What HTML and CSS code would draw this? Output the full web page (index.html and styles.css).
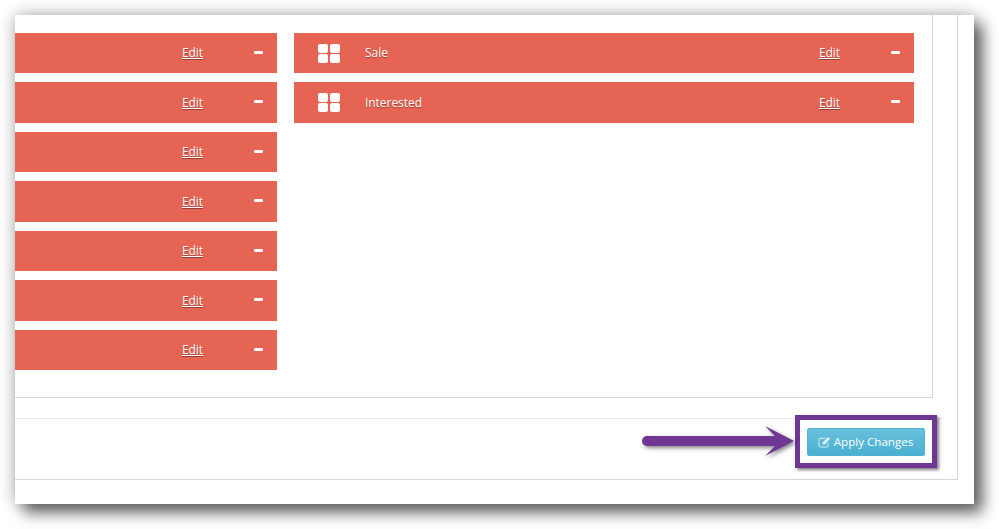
FILE: index.html
```html
<!DOCTYPE html>
<html lang="en">

<head>
    <meta charset="UTF-8">
    <title>Apply Changes</title>
    <link rel="stylesheet" href="styles.css">
</head>

<body>
    <div class="ventana">
        <div class="marco">
            <div class="caja">
                <div class="columna izquierda">
                    <div class="fila"><a class="editar">Edit</a><span class="menos"></span></div>
                    <div class="fila"><a class="editar">Edit</a><span class="menos"></span></div>
                    <div class="fila"><a class="editar">Edit</a><span class="menos"></span></div>
                    <div class="fila"><a class="editar">Edit</a><span class="menos"></span></div>
                    <div class="fila"><a class="editar">Edit</a><span class="menos"></span></div>
                    <div class="fila"><a class="editar">Edit</a><span class="menos"></span></div>
                    <div class="fila"><a class="editar">Edit</a><span class="menos"></span></div>
                </div>
                <div class="columna derecha">
                    <div class="fila">
                        <span class="cuadros"><i></i><i></i><i></i><i></i></span>
                        <span class="nombre">Sale</span>
                        <a class="editar">Edit</a><span class="menos"></span>
                    </div>
                    <div class="fila">
                        <span class="cuadros"><i></i><i></i><i></i><i></i></span>
                        <span class="nombre">Interested</span>
                        <a class="editar">Edit</a><span class="menos"></span>
                    </div>
                </div>
            </div>
            <div class="pie">
                <button class="aplicar">
                    <svg class="lapiz" viewBox="0 0 14 13" width="13" height="12">
                        <path d="M11 7.500v2.500a2 2 0 0 1-2 2H3a2 2 0 0 1-2-2V4.500a2 2 0 0 1 2-2h5" fill="none" stroke="#fff" stroke-width="1" opacity="0.85"/>
                        <path d="M5 7 10.800 1.200l2.100 2.100L7.100 9.100H5z" fill="#fff" opacity="0.85"/>
                    </svg>
                    <span class="etiqueta">Apply Changes</span>
                </button>
            </div>
        </div>

        <!-- anotacion morada encima de la pagina -->
        <div class="recuadro"></div>
        <svg class="flecha" viewBox="0 0 160 36" width="160" height="36">
            <path d="M5 10H133L123 0l29 15-29 15 10-10H5a5 5 0 0 1 0-10z" fill="#6f3694"/>
        </svg>
    </div>
</body>

</html>
```

FILE: styles.css
```css
body, html {
    margin: 0;
    padding: 0;
    height: 100%;
    background-color: #fff;
    font-family: "Open Sans", Arial, sans-serif;
}

.ventana {
    position: relative;
    box-sizing: border-box;
    width: 959px;
    height: 489px;
    margin: 15px 0 0 15px;
    padding-right: 16px;
    background-color: #fff;
    box-shadow: 9px 9px 14px rgba(0, 0, 0, 0.55), 0 0 16px rgba(0, 0, 0, 0.3);
}

.marco {
    box-sizing: border-box;
    height: 465px;
    border-right: 1px solid #d6d6d6;
    border-bottom: 1px solid #d6d6d6;
}

.caja {
    display: flex;
    gap: 17px;
    box-sizing: border-box;
    width: 918px;
    height: 383px;
    padding: 17.75px 18px 0 0;
    border-right: 1px solid #d6d6d6;
    border-bottom: 1px solid #d6d6d6;
}

.columna {
    display: flex;
    flex-direction: column;
    gap: 9px;
}

.izquierda {
    width: 262px;
}

.derecha {
    flex: 1;
}

.fila {
    display: flex;
    align-items: center;
    box-sizing: border-box;
    height: 40.5px;
    padding-bottom: 2px;
    background-color: #e66454;
    color: #fff;
    font-size: 11.9px;
    text-shadow: 0 1px 1px rgba(0, 0, 0, 0.35);
}

.cuadros {
    display: grid;
    grid-template-columns: 10px 10px;
    grid-auto-rows: 9px;
    gap: 1px 2px;
    margin: 2px 0 0 24px;
}

.cuadros i {
    border-radius: 2px;
    background-color: #fff;
}

.nombre {
    margin-left: 25px;
}

.editar {
    margin-left: auto;
    text-decoration: underline;
}

.menos {
    width: 9px;
    height: 3px;
    margin: 0 14px 0 51px;
    border-radius: 1px;
    background-color: #fff;
}

.pie {
    box-sizing: border-box;
    display: flex;
    justify-content: flex-end;
    width: 928px;
    height: 61px;
    margin-top: 20px;
    padding: 9px 18px 0 0;
    border-top: 1px solid #e8e8e8;
}

.aplicar {
    box-sizing: border-box;
    width: 118px;
    height: 28px;
    padding: 0 1px 1px 0;
    border: 1px solid #4fb3d1;
    border-radius: 2px;
    background: linear-gradient(#68c0dc, #4aafd0);
    color: #fff;
    font-family: inherit;
    font-size: 11.6px;
}

.lapiz {
    vertical-align: -2px;
}

.recuadro {
    position: absolute;
    left: 780px;
    top: 400px;
    box-sizing: border-box;
    width: 142px;
    height: 53px;
    border: 5px solid #6f3694;
    box-shadow: 2px 2px 3px rgba(0, 0, 0, 0.5);
}

.flecha {
    position: absolute;
    left: 627px;
    top: 411px;
    filter: drop-shadow(2px 2px 2px rgba(0, 0, 0, 0.5));
}
```
